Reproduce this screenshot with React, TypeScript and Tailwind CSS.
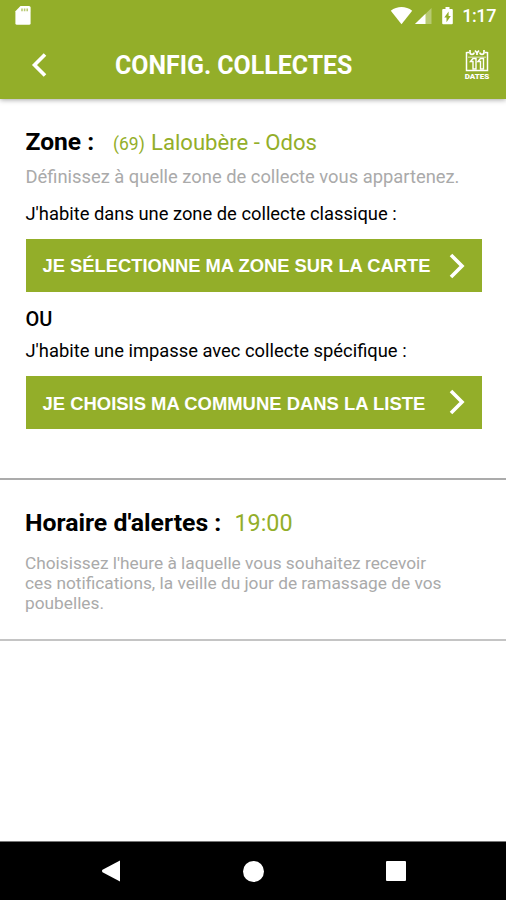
import React from "react";

function StatusBar() {
  return (
    <div className="flex h-8 items-center justify-between pl-[15px] pr-[10px]">
      <svg width="16" height="19" viewBox="0 0 16 19" className="mt-[-2px]" fill="#fff">
        <path d="M5.500 0H14a1.600 1.600 0 0 1 1.600 1.600v15.600a1.600 1.600 0 0 1-1.600 1.600H2a1.600 1.600 0 0 1-1.600-1.600V5.200z" />
        <path d="M6.200 2.600h1.600v2.600H6.200zM8.800 2.600h1.600v2.600H8.800zM11.400 2.600H13v2.600h-1.600z" fill="#93ae29" opacity=".65" />
      </svg>
      <div className="flex items-center">
        <svg width="66" height="20" viewBox="0 0 66 20" fill="#fff" className="mr-[6px]">
          <path d="M.8 4.700C7-.1 16-.1 22.200 4.700L11.500 18.200z" />
          <path d="M41.500 2v16H25z" opacity=".35" />
          <path d="M35.500 7.700V18H25z" />
          <path d="M55.500 1h4v2h2.300q1 0 1 1v13.200q0 1-1 1h-8.600q-1 0-1-1V4q0-1 1-1h2.300z" />
          <path d="M58.600 5.500v4.400h2.200l-4.300 6.300v-4.700h-2.200z" fill="#93ae29" />
        </svg>
        <span className="text-[18px] font-medium leading-8 tracking-[-0.4px]">1:17</span>
      </div>
    </div>
  );
}

function CalendarIcon() {
  return (
    <svg width="24" height="24" viewBox="0 0 24 24" fill="none" stroke="#fff">
      <path d="M1.500 3v18.500h21V3" strokeWidth="1.500" />
      <path d="M1.500 3.500h2.500M20 3.500h2.500" strokeWidth="1.300" />
      <path d="M5 1v2.500q0 1.800 2 1.800t2-1.800M19 1v2.500q0 1.800-2 1.800t-2-1.800M10 1.500l2 2.500 2-2.500M12 4v2" strokeWidth="1.700" />
      <path d="M3 8.200h18" strokeWidth="1.200" opacity=".6" />
      <path d="M5.500 12.500 8 9.500h3V20H8v-7.500zM13 12.500l2.500-3h3V20h-3v-7.500z" strokeWidth="1.400" />
    </svg>
  );
}

function Chevron({ left = false }: { left?: boolean }) {
  return (
    <svg width="16" height="26" viewBox="0 0 16 26" fill="none" stroke="#fff" strokeWidth="3.600">
      <path d={left ? "M14 2.500 3.500 13 14 23.500" : "M2 2 13 13 2 24"} />
    </svg>
  );
}

function ActionButton({ children, text }: { children: React.ReactNode; text: string }) {
  return (
    <button className="flex h-[53px] w-full items-center justify-between bg-[#93ae29] pl-[17px] pr-[17px] font-['Liberation_Sans',Arial,sans-serif] font-bold text-white">
      <span className={"whitespace-nowrap " + text}>{children}</span>
      <Chevron />
    </button>
  );
}

export default function App() {
  return (
    <div className="flex h-[900px] w-[506px] flex-col overflow-hidden bg-white font-[Roboto,sans-serif] text-black">
      <header className="h-[98.500px] shrink-0 bg-[#93ae29] text-white shadow-[0_1px_5px_rgba(0,0,0,0.35)]">
        <StatusBar />
        <div className="flex h-[66px] items-center">
          <div className="flex w-[115px] pl-[31px]"><Chevron left /></div>
          <h1 className="flex-1 whitespace-nowrap pt-[2px] text-[24.900px] font-bold leading-8">CONFIG. COLLECTES</h1>
          <div className="mr-[15px] flex w-[28px] flex-col items-center pb-px">
            <CalendarIcon />
            <span className="text-[8px] font-black leading-[8px]">DATES</span>
          </div>
        </div>
      </header>

      <main className="flex-1">
        <section className="h-[381px] border-b-2 border-[#ababab] pl-[25.500px] pt-[27.500px]">
          <h2 className="flex h-8 items-baseline whitespace-nowrap leading-8">
            <span className="w-[87.500px] text-[24.600px] font-bold">Zone :</span>
            <span className="w-[38px] text-[17.500px] text-[#93ae29]">(69)</span>
            <span className="text-[22.100px] text-[#93ae29]">Laloubère - Odos</span>
          </h2>
          <p className="mt-[7px] h-6 whitespace-nowrap text-[18.350px] leading-6 text-[#aaa]">Définissez à quelle zone de collecte vous appartenez.</p>
          <p className="mt-[13px] h-6 whitespace-nowrap text-[18.350px] leading-6">J'habite dans une zone de collecte classique :</p>
          <div className="mt-[13px] w-[456.500px]">
            <ActionButton text="text-[18.350px]">JE SÉLECTIONNE MA ZONE SUR LA CARTE</ActionButton>
          </div>
          <p className="mt-[14.500px] h-6 text-[20px] font-medium leading-6">OU</p>
          <p className="mt-[8.500px] h-6 whitespace-nowrap text-[18.350px] leading-6">J'habite une impasse avec collecte spécifique :</p>
          <div className="mt-[12.500px] w-[456.500px]">
            <ActionButton text="pt-[3px] text-[18.450px]">JE CHOISIS MA COMMUNE DANS LA LISTE</ActionButton>
          </div>
        </section>
        <section className="h-[161px] border-b-2 border-[#c4c4c4] pl-[25px] pt-[27px]">
          <h2 className="flex h-8 items-baseline whitespace-nowrap leading-8">
            <span className="w-[209.500px] text-[24.800px] font-bold">Horaire d'alertes :</span>
            <span className="text-[23.300px] text-[#93ae29]">19:00</span>
          </h2>
          <p className="mt-[14px] whitespace-nowrap text-[17.300px] leading-5 text-[#aaa]">
            Choisissez l'heure à laquelle vous souhaitez recevoir<br />
            ces notifications, la veille du jour de ramassage de vos<br />
            poubelles.
          </p>
        </section>
      </main>

      <nav className="flex h-[59px] shrink-0 items-center border-t border-[#777] bg-black pl-[102px]">
        <svg width="18" height="22" viewBox="0 0 18 22" fill="#fff"><path d="M18 .5v21L.5 12.200q-1-1.200 0-2.400z" /></svg>
        <div className="ml-[123px] size-[21px] rounded-full bg-white" />
        <div className="ml-[122px] size-[20px] rounded-[1px] bg-white" />
      </nav>
    </div>
  );
}
